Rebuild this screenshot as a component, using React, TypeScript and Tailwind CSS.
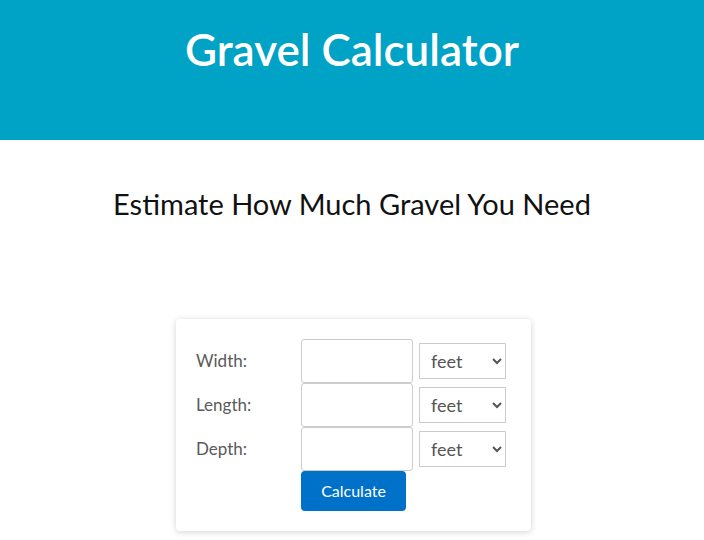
const rows = ['Width:', 'Length:', 'Depth:']

function Row({ label }: { label: string }) {
  return (
    <div className="flex items-center h-[44px]">
      <label className="w-[105px] text-[17px] text-[#5a5a5a]">{label}</label>
      <input type="text" className="w-[112px] h-[44px] border border-[#ccc] rounded-[3px] bg-white" />
      <select className="ml-[6px] w-[87px] h-[36px] border border-[#ccc] bg-white text-[18px] text-[#555] pl-[7px]">
        <option>feet</option>
        <option>inches</option>
        <option>yards</option>
      </select>
    </div>
  )
}

export default function App() {
  return (
    <div className="min-h-[540px] bg-white" style={{ fontFamily: 'Lato, "Open Sans", sans-serif' }}>
      <header className="h-[140px] bg-[#00a2c5] flex justify-center pt-[21px]">
        <h1 className="text-[44px] leading-[56px] text-white font-semibold">Gravel Calculator</h1>
      </header>
      <h2 className="mt-[46px] text-center text-[29px] leading-[36px] text-[#111]">Estimate How Much Gravel You Need</h2>
      <div className="mt-[97px] ml-[176px] w-[355px] bg-white rounded-[4px] shadow-[0_1px_6px_rgba(0,0,0,0.18)] pt-[20px] pb-[20px] pl-[20px]">
        {rows.map((r) => (
          <Row key={r} label={r} />
        ))}
        <button className="ml-[105px] w-[105px] h-[40px] bg-[#0071c8] text-white text-[16px] rounded-[4px]">
          Calculate
        </button>
      </div>
    </div>
  )
}
